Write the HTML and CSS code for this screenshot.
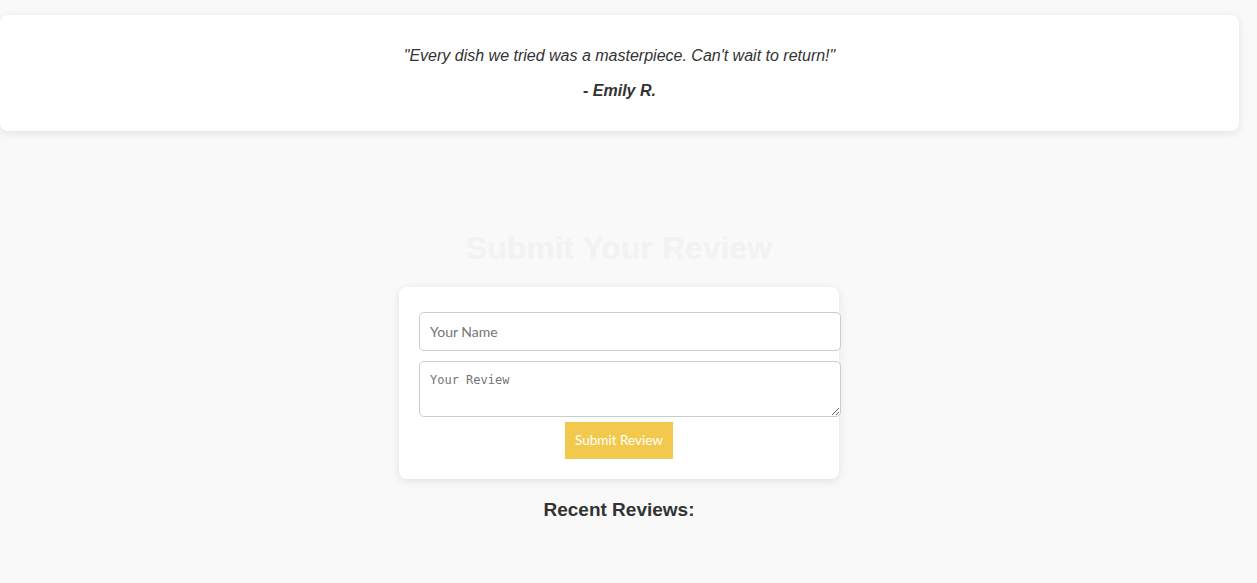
FILE: index.html
```html
<!DOCTYPE html>
<html lang="en">
<head>
<meta charset="utf-8">
<title>Reviews</title>
<link rel="stylesheet" href="styles.css">
</head>
<body>
<div class="page">
  <div class="prev-edge"></div>
  <div class="testimonial">
    <p class="quote">"Every dish we tried was a masterpiece. Can't wait to return!"</p>
    <p class="author">- Emily R.</p>
  </div>
  <section class="review-section">
    <h2 class="section-title">Submit Your Review</h2>
    <form class="review-form">
      <input class="field field-name" type="text" placeholder="Your Name">
      <textarea class="field field-review" placeholder="Your Review"></textarea>
      <div class="actions">
        <button class="submit-btn" type="button">Submit Review</button>
      </div>
    </form>
    <h3 class="recent-title">Recent Reviews:</h3>
  </section>
</div>
</body>
</html>
```
FILE: styles.css
```css
html, body {
  margin: 0;
  padding: 0;
  background: #f9f9f9;
}
body {
  font-family: "Liberation Sans", Arial, sans-serif;
  color: #333;
  height: 583px;
  overflow: hidden;
}
.page {
  width: 1239px;
}
.prev-edge {
  height: 0;
  border-radius: 8px;
  box-shadow: 0 1px 8px rgba(0, 0, 0, 0.08);
}
.testimonial {
  margin-top: 15px;
  background: #fff;
  border-radius: 8px;
  box-shadow: 0 2px 8px rgba(0, 0, 0, 0.1);
  padding: 15px;
  text-align: center;
}
.quote {
  margin: 16px 0;
  font-size: 16px;
  line-height: 19px;
  font-style: italic;
  color: #333;
}
.author {
  margin: 16px 0;
  font-size: 16px;
  line-height: 19px;
  font-style: italic;
  font-weight: bold;
  color: #333;
}
.review-section {
  padding-top: 99px;
  padding-right: 1px;
  display: flex;
  flex-direction: column;
  align-items: center;
}
.section-title {
  margin: 0 0 20px;
  font-size: 32px;
  font-weight: bold;
  color: #f2f2f2;
  line-height: 37px;
}
.review-form {
  width: 400px;
  padding: 20px;
  background: #fff;
  border-radius: 8px;
  box-shadow: 0 2px 10px rgba(0, 0, 0, 0.1);
}
.field {
  display: block;
  width: 100%;
  padding: 10px;
  border: 1px solid #ccc;
  border-radius: 5px;
  background: #fff;
  color: #333;
  outline: none;
}
.field-name {
  margin: 5px 0 10px;
  font-family: Lato, "Open Sans", sans-serif;
  font-size: 14px;
  line-height: 17px;
  height: 17px;
}
.field-review {
  margin: 0 0 5px;
  box-sizing: border-box;
  width: 422px;
  height: 56px;
  font-family: "DejaVu Sans Mono", monospace;
  font-size: 12px;
  line-height: 18px;
  padding-top: 9px;
}
.field::placeholder {
  color: #757575;
}
.actions {
  display: flex;
  justify-content: center;
}
.submit-btn {
  background: #f2c94c;
  color: #fff;
  border: none;
  padding: 10px;
  height: 37px;
  white-space: nowrap;
  font-family: Lato, "Open Sans", sans-serif;
  font-size: 13.5px;
  line-height: 17px;
  cursor: pointer;
}
.recent-title {
  margin: 20px 0;
  font-size: 19px;
  font-weight: bold;
  color: #333;
}
```
